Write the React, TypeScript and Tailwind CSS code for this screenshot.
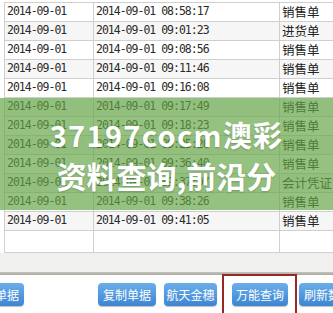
import React from "react";

const rows: [string, string][] = [
  ["08:58:17", "销售单"],
  ["09:01:23", "进货单"],
  ["09:08:56", "销售单"],
  ["09:11:46", "销售单"],
  ["09:16:08", "销售单"],
  ["09:17:49", "销售单"],
  ["09:18:23", "销售单"],
  ["09:25:20", "销售单"],
  ["09:36:40", "销售单"],
  ["09:37:07", "会计凭证"],
  ["09:38:26", "销售单"],
  ["09:41:05", "销售单"],
];

const mono = "font-['DejaVu_Sans_Mono',monospace] text-[11.5px] tracking-[-1px] text-[#2a2a2a]";
const cjk = "font-['Noto_Sans_CJK_SC',sans-serif]";

function Btn({ label, className }: { label: string; className: string }) {
  return (
    <div
      className={`h-[23px] shrink-0 rounded-[4px] bg-gradient-to-b from-[#6aaeea] to-[#3d85d2] flex items-center justify-center text-white text-[12px] ${cjk} shadow-[0_1px_1px_rgba(0,0,0,0.25)] ${className}`}
    >
      {label}
    </div>
  );
}

export default function App() {
  return (
    <div className="relative w-[333px] h-[313px] overflow-hidden bg-white">
      <div className="pt-[2px] pl-[4px]">
        <div className="border-t border-[#cfcfcf]">
          {rows.map(([t, k], i) => (
            <div
              key={i}
              className={`flex h-[19px] border-b border-[#cfcfcf] ${i % 2 === 1 ? "bg-[#f6f6f6]" : "bg-white"}`}
            >
              <div className={`w-[90px] shrink-0 border-l border-r border-[#cfcfcf] pl-[2px] flex items-center ${mono}`}>
                2014-09-01
              </div>
              <div className={`w-[186px] shrink-0 border-r border-[#cfcfcf] pl-[2px] flex items-center ${mono}`}>
                2014-09-01 {t}
              </div>
              <div className={`flex-1 pl-[2px] flex items-center text-[12.5px] text-[#222] ${cjk}`}>{k}</div>
            </div>
          ))}
          <div className="flex h-[22px] border-b border-[#cfcfcf] bg-white">
            <div className="w-[90px] shrink-0 border-l border-r border-[#cfcfcf]" />
            <div className="w-[186px] shrink-0 border-r border-[#cfcfcf]" />
            <div className="flex-1" />
          </div>
        </div>
      </div>
      <div className="h-[19px] bg-[#f0f0ef]" />
      <div className="h-[3px] bg-gradient-to-b from-[#c4c4bc] to-[#a9a9a0]" />
      <div className="flex items-start pt-[8px] bg-white">
        <Btn label="保存单据" className="w-[58px] -ml-[34px]" />
        <Btn label="复制单据" className="w-[58px] ml-[74px]" />
        <Btn label="航天金穗" className="w-[53px] ml-[8px]" />
        <Btn label="万能查询" className="w-[56px] ml-[15px]" />
        <Btn label="刷新数据" className="w-[58px] ml-[11px]" />
      </div>

      <div className="absolute left-[222px] top-[274px] w-[75px] h-[50px] border-2 border-[#962828]" />

      <div className="absolute left-0 right-0 top-[98px] h-[112px] bg-[rgba(100,165,70,0.68)] flex flex-col items-center pt-[16px]">
        <div
          className={`h-[41px] leading-[41px] text-white font-bold text-[29px] tracking-[1.3px] ${cjk} [text-shadow:0_1px_2px_rgba(0,0,0,0.2)]`}
        >
          37197cocm澳彩
        </div>
        <div
          className={`h-[41px] leading-[41px] text-white font-bold text-[30px] ${cjk} [text-shadow:0_1px_2px_rgba(0,0,0,0.2)]`}
        >
          资料查询,前沿分
        </div>
      </div>
    </div>
  );
}
